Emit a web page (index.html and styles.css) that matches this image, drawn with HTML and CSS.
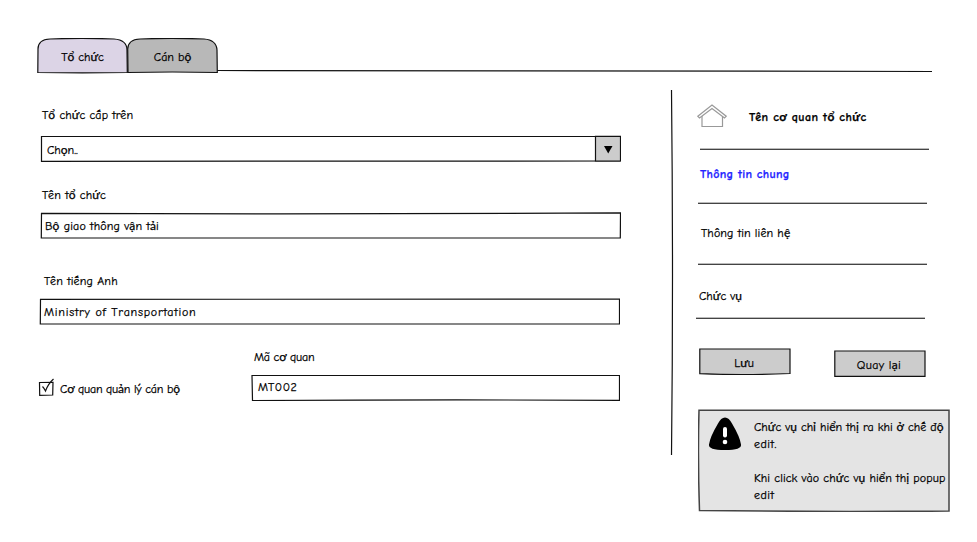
FILE: index.html
```
<!DOCTYPE html>
<html lang="vi">
<head>
<meta charset="utf-8">
<title>Tổ chức</title>
<link rel="stylesheet" href="styles.css">
</head>
<body>
<div class="page">
  <nav class="tabs">
    <a class="tab"><svg class="sketch" viewBox="0 0 91 36"><path class="fill-active" d="M.8 34.500 1 11Q1 1.500 13 1Q45-.3 77 1Q90 2 90 12L90.300 34.500Q45 35.300.8 34.500Z"/></svg><span class="t-tab1">Tổ chức</span></a>
    <a class="tab"><svg class="sketch" viewBox="0 0 91 36"><path class="fill-tab" d="M1 34.500.7 11Q1 1.500 13 1Q45-.3 77 1Q89.500 2 90 12L90.300 34.500Q45 33.500 1 34.500Z"/></svg><span class="t-tab2">Cán bộ</span></a>
    <svg class="tab-rule" viewBox="0 0 715 4"><path d="M0 1.500Q140 1 300 1.800T715 2.500"/></svg>
  </nav>
  <div class="columns">
    <main class="form">
      <label class="label l-parent"><span class="t-parent">Tổ chức cấp trên</span></label>
      <div class="field select"><svg class="sketch" viewBox="0 0 581 27"><path class="fill-paper" d="M1.500 1.500Q290 .4 580.500 1.500L580 26Q290 25 1.500 26.300Z"/><path class="fill-button" d="M555.500 1.300H580.500V26H555.500Z"/><path class="ink" d="M564 11H572.500L568.200 18.500Z"/></svg><span class="t-choose">Chọn..</span></div>
      <label class="label l-name"><span class="t-name">Tên tổ chức</span></label>
      <div class="field name"><svg class="sketch" viewBox="0 0 581 27"><path class="fill-paper" d="M1.500 1.300Q290 2.500 580.500.8L580.300 26Q290 27 1.300 26Z"/></svg><span class="t-ministry">Bộ giao thông vận tải</span></div>
      <label class="label l-english"><span class="t-english">Tên tiếng Anh</span></label>
      <div class="field english"><svg class="sketch" viewBox="0 0 581 27"><path class="fill-paper" d="M1.500 1.300Q290 2.200 580.500 1.200V26Q290 27 1.300 26Z"/></svg><span class="t-transport">Ministry of Transportation</span></div>
      <div class="bottom">
        <div class="check"><svg class="checkbox" viewBox="0 0 18 18"><path d="M1.500 4.500 15 4.300 14.700 17 1.700 17.300Z"/><path d="M4.500 8.500Q6 10 7.500 13Q10 6 15.500 1"/></svg><span class="t-manage">Cơ quan quản lý cán bộ</span></div>
        <div class="code">
          <label class="label l-code"><span class="t-codelabel">Mã cơ quan</span></label>
          <div class="field codefield"><svg class="sketch" viewBox="0 0 369 27"><path class="fill-paper" d="M1 1.500Q185 .7 368.500 1.500V26.300Q185 25.500 1.500 26.500Z"/></svg><span class="t-code">MT002</span></div>
        </div>
      </div>
    </main>
    <svg class="divider" viewBox="0 0 4 365"><path d="M1.500 0Q3.500 185 1.500 365"/></svg>
    <aside class="side">
      <div class="side-head"><svg class="home" viewBox="0 0 30 24"><path d="M5 12V22.500H25.500V12"/><path d="M.8 12.200 15 1 29.200 12.200 27.500 14 15 4.500 2.500 14Z"/></svg><span class="t-org">Tên cơ quan tổ chức</span></div>
      <div class="side-item current"><span class="t-general">Thông tin chung</span></div>
      <div class="side-item contact"><span class="t-contact">Thông tin liên hệ</span></div>
      <div class="side-item role"><span class="t-role">Chức vụ</span></div>
      <div class="actions">
        <button class="btn save"><svg class="sketch" viewBox="0 0 92 27"><path class="fill-button" d="M.8 1H91V25.500Q45 27.500.8 25.700Z"/></svg><span class="t-save">Lưu</span></button>
        <button class="btn back"><svg class="sketch" viewBox="0 0 92 27"><path class="fill-button" d="M.8 1H91V26.300H.8Z"/></svg><span class="t-back">Quay lại</span></button>
      </div>
      <div class="note"><svg class="sketch" viewBox="0 0 252 103"><path class="fill-note" d="M1 1.300H251V102Q130 103 1.500 101.500Q-.3 50 1 1.300Z"/></svg>
        <svg class="warning" viewBox="0 0 34 34"><path class="ink" d="M17 .5Q21 .5 24 6.500Q32 20 33 27.500Q34 33 17 33Q0 33 1 27.500Q2 20 10 6.500Q13 .5 17 .5Z"/><path class="mark" d="M17 12V18.500"/><circle class="dot" cx="17" cy="25" r="2.300"/></svg>
        <p class="note-text"><span class="t-note1">Chức vụ chỉ hiển thị ra khi ở chế độ</span><br><span class="t-edit">edit.</span><br><br><span class="t-note2">Khi click vào chức vụ hiển thị popup</span><br><span class="t-edit">edit</span></p>
      </div>
    </aside>
  </div>
</div>
</body>
</html>
```
FILE: styles.css
```
* { box-sizing: border-box; }
body { margin: 0; background: #fff; color: #000; font: 12px/17px "Comic Sans MS", "Comic Neue", Lato, "Open Sans", sans-serif; }
.page { width: 977px; height: 542px; padding-top: 38px; overflow: hidden; }
svg { display: block; flex: none; fill: none; stroke: #111; stroke-width: 1.2; }
span { white-space: nowrap; position: relative; -webkit-text-stroke: .25px currentColor; }
.sketch { position: absolute; inset: 0; width: 100%; height: 100%; }
.fill-active { fill: #dcd4e6; }
.fill-tab { fill: #b8b8b8; }
.fill-paper { fill: #fff; }
.fill-button { fill: #ccc; }
.fill-note { fill: #e4e4e4; stroke: #444; stroke-width: 1.5; }
.ink { fill: #000; stroke: none; }
.tabs { display: flex; height: 36px; margin-left: 37px; }
.tab { position: relative; width: 91px; height: 36px; display: flex; justify-content: center; padding-top: 11px; }
.tab + .tab { margin-left: -1px; }
.tab-rule { width: 715px; height: 4px; margin: 31px 0 0 -1px; }
.columns { display: flex; height: 450px; padding: 16px 0 0 37px; }
.form { width: 633px; padding-top: 17px; }
.label { display: block; height: 29px; padding-left: 5px; }
.field { position: relative; width: 581px; height: 27px; margin-left: 3px; padding: 6px 0 0 5px; }
.select { margin-left: 3px; padding: 7px 0 0 7px; }
.l-parent { height: 28px; }
.l-name { height: 25px; margin-top: 25px; }
.l-english { height: 25px; margin-top: 34px; padding-left: 7px; }
.english { margin-left: 2px; }
.bottom { display: flex; margin-top: 24px; }
.check { display: flex; width: 214px; padding-top: 29px; }
.check span { margin: 3px 0 0 4px; }
.checkbox { width: 18px; height: 18px; margin-left: 1px; }
.code { width: 369px; }
.l-code { height: 25px; padding-left: 3px; }
.codefield { width: 369px; margin-left: 0; padding: 5px 0 0 7px; }
.divider { width: 4px; height: 365px; }
.side { width: 255px; padding: 14px 0 0 24px; }
.side-head, .side-item { width: 229px; background: linear-gradient(#bbb 50%, #444 50%) left bottom / 100% 2px no-repeat; }
.side-head { display: flex; align-items: flex-start; height: 46px; margin-left: 2px; font-weight: 700; }
.home { width: 30px; height: 24px; margin-left: -3px; stroke: #999; }
.side-head span { margin: 5px 0 0 22px; }
.current { height: 54px; padding: 16px 0 0 2px; color: #22f; font-weight: 700; }
.contact { height: 61px; padding: 21px 0 0 3px; }
.role { height: 54px; margin-left: -2px; padding: 23px 0 0 3px; }
.actions { display: flex; justify-content: space-between; width: 227px; margin: 29px 0 0 1px; }
.btn { position: relative; width: 92px; height: 27px; padding: 4px 2px 0 0; border: 0; background: none; color: #000; font: inherit; }
.back { margin-top: 2px; }
.note { position: relative; display: flex; width: 252px; height: 103px; margin-top: 32px; padding: 8px 0 0 10px; }
.warning { position: relative; width: 34px; height: 34px; }
.mark { stroke: #fff; stroke-width: 4; stroke-linecap: round; }
.dot { fill: #fff; stroke: none; }
.note-text { margin: 2px 0 0 12px; white-space: nowrap; }
.t-transport { letter-spacing: .75px; }
.t-general { letter-spacing: .3px; }
.t-org { letter-spacing: .4px; }
.t-code { letter-spacing: .6px; }
.t-contact, .t-parent, .t-note2 { letter-spacing: .1px; }
.t-name, .t-ministry, .t-english { letter-spacing: .15px; }
.t-manage, .t-codelabel { letter-spacing: -.22px; }
.t-back { letter-spacing: .35px; }
.t-edit { letter-spacing: .5px; }
```
